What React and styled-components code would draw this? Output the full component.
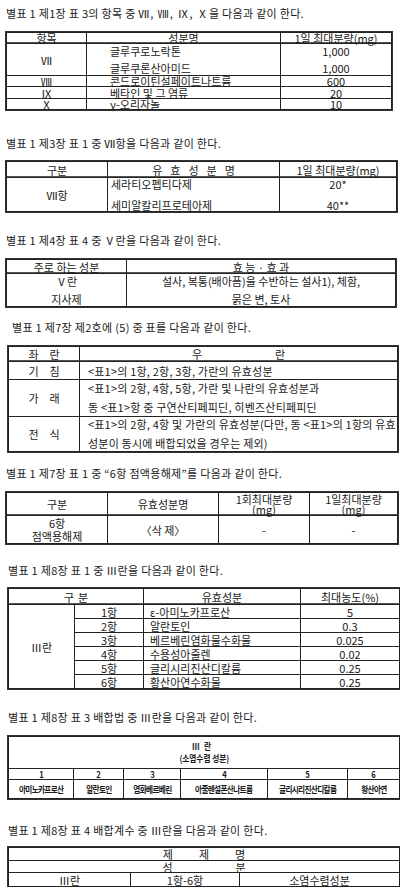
import styled, { createGlobalStyle } from 'styled-components';

const GlobalStyle = createGlobalStyle`
  html, body { margin: 0; padding: 0; background: #fff; }
  body {
    font-family: "Noto Sans CJK KR", "Liberation Sans", sans-serif;
    font-size: 11px; color: #1a1a1a;
  }
`;

const Page = styled.div`
  width: 400px; display: flex; flex-direction: column;
`;

const Section = styled.section`
  display: flex; flex-direction: column;
  margin-top: ${p => p.$top}px;
`;

const Heading = styled.p`
  margin: 0 0 0 ${p => p.$left}px;
  height: 14px; line-height: 14px;
  white-space: nowrap; letter-spacing: 0.3px;
`;

const Numerals = styled.span`
  letter-spacing: 1px;
`;

// outline doubles the outer frame without changing the layout
const Table = styled.table`
  margin: ${p => p.$gap}px 0 0 ${p => p.$left}px;
  width: ${p => p.$width}px;
  table-layout: fixed; border-collapse: collapse;
  border: 1px solid #222;
  outline: 1px solid #333;
`;

const Row = styled.tr`
  & > td { height: ${p => p.$h - 1}px; }
`;

const Cell = styled.td`
  border: 1px solid #222;
  padding: 0 0 0 ${p => p.$pl ?? 0}px;
  text-align: ${p => p.$align ?? 'center'};
  vertical-align: middle;
  line-height: ${p => p.$lh ?? 10}px;
  white-space: nowrap;
  font-size: 11px;
  letter-spacing: ${p => p.$ls ?? 0}px;
`;

const HeadCell = styled(Cell)`
  box-shadow: inset 0 -1px 0 #555;
`;

const Spread = styled.span`
  letter-spacing: ${p => p.$ls}px;
  margin-right: -${p => p.$ls}px;
`;

const Lines = styled.div`
  display: flex; flex-direction: column;
  align-items: ${p => p.$align ?? 'center'};
  gap: ${p => p.$gap}px;
  line-height: ${p => p.$lh ?? 11}px;
`;

const Tiny = styled.span`
  display: inline-block; font-size: 9px; font-weight: 700;
  line-height: ${p => p.$lh ?? 10}px; letter-spacing: ${p => p.$ls ?? -0.8}px;
  transform: scaleX(0.85);
`;

const table6 = [
  ['1항', 'ε-아미노카프로산', '5'],
  ['2항', '알란토인', '0.3'],
  ['3항', '베르베린염화물수화물', '0.025'],
  ['4항', '수용성아줄렌', '0.02'],
  ['5항', '글리시리진산디칼륨', '0.25'],
  ['6항', '황산아연수화물', '0.25'],
];

const table7 = ['아미노카프로산', '알란토인', '염화베르베린', '아줄렌설폰산나트륨', '글리시리진산디칼륨', '황산아연'];

export default function App() {
  return (
    <Page>
      <GlobalStyle />

      <Section $top={6}>
        <Heading $left={6}>별표 1 제1장 표 3의 항목 중 <Numerals>Ⅶ, Ⅷ, Ⅸ, Ⅹ</Numerals>을 다음과 같이 한다.</Heading>
        <Table $gap={12} $left={6} $width={385}>
          <colgroup><col style={{ width: 80 }} /><col style={{ width: 194 }} /><col style={{ width: 111 }} /></colgroup>
          <tbody>
            <Row $h={11}><HeadCell>항목</HeadCell><HeadCell>성분명</HeadCell><HeadCell>1일 최대분량(mg)</HeadCell></Row>
            <Row $h={32}>
              <Cell>Ⅶ</Cell>
              <Cell $align="left" $pl={23}><Lines $align="flex-start" $gap={6}><span>글루쿠로노락톤</span><span>글루쿠론산아미드</span></Lines></Cell>
              <Cell><Lines $gap={6}><span>1,000</span><span>1,000</span></Lines></Cell>
            </Row>
            <Row $h={11}><Cell>Ⅷ</Cell><Cell $align="left" $pl={23}>콘드로이틴설페이트나트륨</Cell><Cell>600</Cell></Row>
            <Row $h={12}><Cell>Ⅸ</Cell><Cell $align="left" $pl={23}>베타인 및 그 염류</Cell><Cell>20</Cell></Row>
            <Row $h={11}><Cell>Ⅹ</Cell><Cell $align="left" $pl={23}>γ-오리자놀</Cell><Cell>10</Cell></Row>
          </tbody>
        </Table>
      </Section>

      <Section $top={26}>
        <Heading $left={6}>별표 1 제3장 표 1 중 Ⅶ항을 다음과 같이 한다.</Heading>
        <Table $gap={11} $left={6} $width={390}>
          <colgroup><col style={{ width: 101 }} /><col style={{ width: 172 }} /><col style={{ width: 117 }} /></colgroup>
          <tbody>
            <Row $h={16}><HeadCell>구분</HeadCell><HeadCell><Spread $ls={8}>유효성분명</Spread></HeadCell><HeadCell>1일 최대분량(mg)</HeadCell></Row>
            <Row $h={34}>
              <Cell>Ⅶ항</Cell>
              <Cell $align="left" $pl={3}><Lines $align="flex-start" $gap={10}><span>세라티오펩티다제</span><span>세미알칼리프로테아제</span></Lines></Cell>
              <Cell><Lines $gap={10}><span>20*</span><span>40**</span></Lines></Cell>
            </Row>
          </tbody>
        </Table>
      </Section>

      <Section $top={21}>
        <Heading $left={6}>별표 1 제4장 표 4 중 Ⅴ란을 다음과 같이 한다.</Heading>
        <Table $gap={12} $left={6} $width={389}>
          <colgroup><col style={{ width: 120 }} /><col style={{ width: 269 }} /></colgroup>
          <tbody>
            <Row $h={14}><HeadCell>주로 하는 성분</HeadCell><HeadCell>효 능 · 효 과</HeadCell></Row>
            <Row $h={33}>
              <Cell><Lines $gap={7}><span>Ⅴ란</span><span>지사제</span></Lines></Cell>
              <Cell><Lines $gap={7}><span>설사, 복통(배아픔)을 수반하는 설사1), 체함,</span><span>묽은 변, 토사</span></Lines></Cell>
            </Row>
          </tbody>
        </Table>
      </Section>

      <Section $top={13}>
        <Heading $left={12}>별표 1 제7장 제2호에 (5) 중 표를 다음과 같이 한다.</Heading>
        <Table $gap={12} $left={8} $width={389}>
          <colgroup><col style={{ width: 71 }} /><col style={{ width: 318 }} /></colgroup>
          <tbody>
            <Row $h={15}><HeadCell><Spread $ls={11}>좌란</Spread></HeadCell><HeadCell><Spread $ls={73}>우란</Spread></HeadCell></Row>
            <Row $h={18}><Cell><Spread $ls={11}>기침</Spread></Cell><Cell $align="left" $pl={8} $ls={0.2}>&lt;표1&gt;의 1항, 2항, 3항, 가란의 유효성분</Cell></Row>
            <Row $h={37}>
              <Cell><Spread $ls={11}>가래</Spread></Cell>
              <Cell $align="left" $pl={8} $ls={0.2}><Lines $align="flex-start" $gap={8}><span>&lt;표1&gt;의 2항, 4항, 5항, 가란 및 나란의 유효성분과</span><span>동 &lt;표1&gt;항 중 구연산티페피딘, 히벤즈산티페피딘</span></Lines></Cell>
            </Row>
            <Row $h={35}>
              <Cell><Spread $ls={11}>전식</Spread></Cell>
              <Cell $align="left" $pl={8} $ls={0.2}><Lines $align="flex-start" $gap={8}><span>&lt;표1&gt;의 2항, 4항 및 가란의 유효성분(다만, 동 &lt;표1&gt;의 1항의 유효</span><span>성분이 동시에 배합되었을 경우는 제외)</span></Lines></Cell>
            </Row>
          </tbody>
        </Table>
      </Section>

      <Section $top={14}>
        <Heading $left={6}>별표 1 제7장 표 1 중 “6항 점액용해제”를 다음과 같이 한다.</Heading>
        <Table $gap={12} $left={6} $width={391}>
          <colgroup><col style={{ width: 101 }} /><col style={{ width: 111 }} /><col style={{ width: 91 }} /><col style={{ width: 88 }} /></colgroup>
          <tbody>
            <Row $h={23}>
              <HeadCell>구분</HeadCell><HeadCell>유효성분명</HeadCell>
              <HeadCell><Lines $gap={0} $lh={10}><span>1회최대분량</span><span>(mg)</span></Lines></HeadCell>
              <HeadCell><Lines $gap={0} $lh={10}><span>1일최대분량</span><span>(mg)</span></Lines></HeadCell>
            </Row>
            <Row $h={28}>
              <Cell><Lines $gap={2} $lh={11}><span>6항</span><span>점액용해제</span></Lines></Cell>
              <Cell>〈삭 제〉</Cell><Cell>-</Cell><Cell>-</Cell>
            </Row>
          </tbody>
        </Table>
      </Section>

      <Section $top={19}>
        <Heading $left={8}>별표 1 제8장 표 1 중 Ⅲ란을 다음과 같이 한다.</Heading>
        <Table $gap={11} $left={8} $width={391}>
          <colgroup><col style={{ width: 66 }} /><col style={{ width: 69 }} /><col style={{ width: 157 }} /><col style={{ width: 99 }} /></colgroup>
          <tbody>
            <Row $h={16}><HeadCell colSpan={2}><Spread $ls={4}>구분</Spread></HeadCell><HeadCell>유효성분</HeadCell><HeadCell>최대농도(%)</HeadCell></Row>
            {table6.map(([no, name, val], i) => (
              <Row key={no} $h={14}>
                {i === 0 && <Cell rowSpan={6}>Ⅲ란</Cell>}
                <Cell>{no}</Cell>
                <Cell $align="left" $pl={6}>{name}</Cell>
                <Cell>{val}</Cell>
              </Row>
            ))}
          </tbody>
        </Table>
      </Section>

      <Section $top={21}>
        <Heading $left={8}>별표 1 제8장 표 3 배합법 중 Ⅲ란을 다음과 같이 한다.</Heading>
        <Table $gap={12} $left={8} $width={391}>
          <colgroup>
            {[65, 50, 57, 87, 80, 52].map((w, i) => <col key={i} style={{ width: w }} />)}
          </colgroup>
          <tbody>
            <Row $h={32}>
              <Cell colSpan={6}><Lines $gap={2} $lh={10}><Tiny $ls={5}>Ⅲ란</Tiny><Tiny $ls={0}>(소염수렴 성분)</Tiny></Lines></Cell>
            </Row>
            <Row $h={11}>{[1, 2, 3, 4, 5, 6].map(n => <Cell key={n} $lh={8}><Tiny $lh={8}>{n}</Tiny></Cell>)}</Row>
            <Row $h={19}>{table7.map(t => <Cell key={t}><Tiny>{t}</Tiny></Cell>)}</Row>
          </tbody>
        </Table>
      </Section>

      <Section $top={24}>
        <Heading $left={8}>별표 1 제8장 표 4 배합계수 중 Ⅲ란을 다음과 같이 한다.</Heading>
        <Table $gap={10} $left={8} $width={391}>
          <colgroup><col style={{ width: 122 }} /><col style={{ width: 109 }} /><col style={{ width: 160 }} /></colgroup>
          <tbody>
            <Row $h={13}><Cell colSpan={3}><Spread $ls={26}>제제명</Spread></Cell></Row>
            <Row $h={12}><Cell colSpan={3}><Spread $ls={63}>성분</Spread></Cell></Row>
            <Row $h={14}><Cell>Ⅲ란</Cell><Cell>1항-6항</Cell><Cell>소염수렴성분</Cell></Row>
          </tbody>
        </Table>
      </Section>
    </Page>
  );
}
